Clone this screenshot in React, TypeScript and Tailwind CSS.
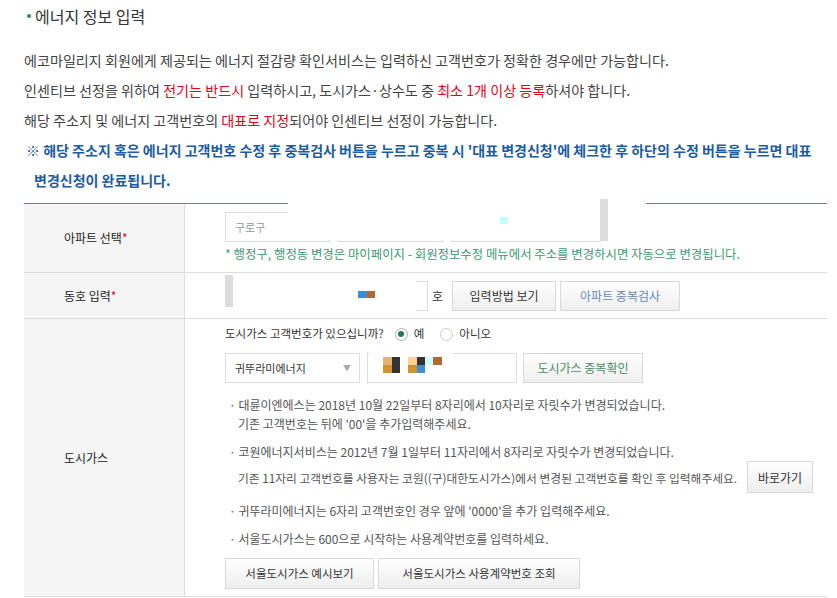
import React from "react";

const Btn = ({ children, className }: { children: React.ReactNode; className: string }) => (
  <button
    className={`flex items-center justify-center border border-[#d8d8d8] bg-linear-to-b from-white to-[#eeeeee] ${className}`}
  >
    {children}
  </button>
);

const Block = ({ className }: { className: string }) => <div className={`absolute ${className}`} />;

export default function App() {
  return (
    <div className="w-[837px] h-[598px] overflow-hidden bg-white text-[#444] font-['Noto_Sans_CJK_KR',sans-serif]">
      <div className="pl-6 pr-[10px]">
        <div className="h-8 flex items-center pl-[3px] gap-[4px]">
          <span className="w-[4px] h-[4px] rounded-full bg-[#2a8a5c]" />
          <h2 className="text-[16px] text-[#333] leading-none">에너지 정보 입력</h2>
        </div>

        <div className="mt-[13px] leading-[30px] whitespace-nowrap">
          <p className="text-[14.1px]">에코마일리지 회원에게 제공되는 에너지 절감량 확인서비스는 입력하신 고객번호가 정확한 경우에만 가능합니다.</p>
          <p className="text-[14.1px]">
            인센티브 선정을 위하여 <span className="text-[#e8001c]">전기는 반드시</span> 입력하시고, 도시가스·상수도 중{" "}
            <span className="text-[#e8001c]">최소 1개 이상 등록</span>하셔야 합니다.
          </p>
          <p className="text-[14.1px]">
            해당 주소지 및 에너지 고객번호의 <span className="text-[#e8001c]">대표로 지정</span>되어야 인센티브 선정이 가능합니다.
          </p>
          <p className="text-[14px] font-bold text-[#1b5ca4] pl-[2px]">
            ※ 해당 주소지 혹은 에너지 고객번호 수정 후 중복검사 버튼을 누르고 중복 시 '대표 변경신청'에 체크한 후 하단의 수정 버튼을 누르면 대표
          </p>
          <p className="text-[14px] font-bold text-[#1b5ca4] pl-[10px]">변경신청이 완료됩니다.</p>
        </div>

        <div className="relative mt-2 border-t border-[#3f9a78] text-[#333]">
          {/* Row 1 */}
          <div className="flex border-b border-[#ddd]">
            <div className="w-[161px] shrink-0 bg-[#f5f5f5] border-r border-[#ddd] flex items-center pl-10 text-[12px] text-[#222]">
              아파트 선택<span className="text-[#e8001c]">*</span>
            </div>
            <div className="flex-1 h-[68px] pl-10 pt-2 flex flex-col">
              <div className="flex gap-2">
                <div className="w-[105px] h-[30px] border border-[#ddd] flex items-center pl-[9px] text-[11px] text-[#999]">구로구</div>
                <div className="w-[105px] h-[30px] border border-[#ddd]" />
                <div className="w-[150px] h-[30px] border border-[#ddd]" />
              </div>
              <p className="mt-[4px] text-[12.4px] leading-[16px] text-[#3b9a74] whitespace-nowrap">
                * 행정구, 행정동 변경은 마이페이지 - 회원정보수정 메뉴에서 주소를 변경하시면 자동으로 변경됩니다.
              </p>
            </div>
          </div>

          {/* Row 2 */}
          <div className="flex border-b border-[#ddd]">
            <div className="w-[161px] shrink-0 bg-[#f5f5f5] border-r border-[#ddd] flex items-center pl-10 text-[12px] text-[#222]">
              동호 입력<span className="text-[#e8001c]">*</span>
            </div>
            <div className="flex-1 h-[45px] pl-10 flex items-center">
              <div className="w-[203px] h-[30px] border border-[#ddd]" />
              <span className="ml-[4px] text-[12px]">호</span>
              <Btn className="ml-[9px] w-[104px] h-[30px] text-[12px] text-[#333]">입력방법 보기</Btn>
              <Btn className="ml-[4px] w-[120px] h-[30px] text-[12px] text-[#6a88b6]">아파트 중복검사</Btn>
            </div>
          </div>

          {/* Row 3 */}
          <div className="flex border-b border-[#ddd]">
            <div className="w-[161px] shrink-0 bg-[#f5f5f5] border-r border-[#ddd] flex items-center pl-10 text-[12px] text-[#222]">
              도시가스
            </div>
            <div className="flex-1 h-[277px] pl-10 pt-[7px] flex flex-col">
              <div className="h-4 flex items-center text-[11.5px] text-[#333] whitespace-nowrap">
                <span>도시가스 고객번호가 있으십니까?</span>
                <span className="ml-[11px] w-[13px] h-[13px] rounded-full border border-[#aaa] flex items-center justify-center">
                  <span className="w-[6px] h-[6px] rounded-full bg-[#1f7a50]" />
                </span>
                <span className="ml-[6px]">예</span>
                <span className="ml-[16px] w-[13px] h-[13px] rounded-full border border-[#ccc]" />
                <span className="ml-[6px]">아니오</span>
              </div>

              <div className="mt-[11px] flex">
                <div className="w-[135px] h-[30px] border border-[#ddd] flex items-center justify-between pl-[9px] pr-[8px] text-[11px] text-[#333]">
                  <span>귀뚜라미에너지</span>
                  <span className="text-[8px] text-[#aaa]">▼</span>
                </div>
                <div className="ml-[7px] w-[150px] h-[30px] border border-[#ddd]" />
                <Btn className="ml-[6px] w-[120px] h-[30px] text-[12px] text-[#4a8a6a]">도시가스 중복확인</Btn>
              </div>

              <div className="mt-[12px] text-[12px] leading-[19px] text-[#555] whitespace-nowrap">
                <p className="pl-[4px]">· 대륜이엔에스는 2018년 10월 22일부터 8자리에서 10자리로 자릿수가 변경되었습니다.</p>
                <p className="pl-[13px]">기존 고객번호는 뒤에 '00'을 추가입력해주세요.</p>
                <p className="pl-[4px] mt-[9px]">· 코원에너지서비스는 2012년 7월 1일부터 11자리에서 8자리로 자릿수가 변경되었습니다.</p>
                <div className="pl-[13px] h-[32px] flex items-center">
                  <span className="text-[11.75px]">기존 11자리 고객번호를 사용자는 코원((구)대한도시가스)에서 변경된 고객번호를 확인 후 입력해주세요.</span>
                  <Btn className="ml-[10px] w-[66px] h-[32px] text-[12px] text-[#333]">바로가기</Btn>
                </div>
                <p className="pl-[4px] mt-[8px]">· 귀뚜라미에너지는 6자리 고객번호인 경우 앞에 '0000'을 추가 입력해주세요.</p>
                <p className="pl-[4px] mt-[9px]">· 서울도시가스는 600으로 시작하는 사용계약번호를 입력하세요.</p>
              </div>

              <div className="mt-[10px] flex gap-[4px]">
                <Btn className="w-[149px] h-[31px] text-[11.5px] text-[#333]">서울도시가스 예시보기</Btn>
                <Btn className="w-[202px] h-[31px] text-[11.5px] text-[#333]">서울도시가스 사용계약번호 조회</Btn>
              </div>
            </div>
          </div>

          {/* redaction overlays */}
          <Block className="left-[264px] top-[-8px] w-[358px] h-[44px] bg-white" />
          <Block className="left-[576px] top-[-5px] w-[8px] h-[42px] bg-[#dddddd]" />
          <Block className="left-[476px] top-[13px] w-[8px] h-[7px] bg-[#c6fdfd]" />

          <Block className="left-[200px] top-[75px] w-[192px] h-[34px] bg-white" />
          <Block className="left-[201px] top-[71px] w-[8px] h-[32px] bg-[#dddddd]" />
          <Block className="left-[334px] top-[87px] w-[9px] h-[7px] bg-[#3a8fd6]" />
          <Block className="left-[343px] top-[87px] w-[8px] h-[7px] bg-[#b06a30]" />

          <Block className="left-[345px] top-[147px] w-[84px] h-[29px] bg-white" />
          <Block className="left-[359px] top-[153px] w-[9px] h-[8px] bg-[#e8b070]" />
          <Block className="left-[368px] top-[153px] w-[8px] h-[16px] bg-[#333333]" />
          <Block className="left-[359px] top-[161px] w-[9px] h-[8px] bg-[#d4922e]" />
          <Block className="left-[384px] top-[153px] w-[9px] h-[8px] bg-[#ffd090]" />
          <Block className="left-[393px] top-[153px] w-[8px] h-[8px] bg-[#333333]" />
          <Block className="left-[401px] top-[153px] w-[8px] h-[8px] bg-[#d0ffff]" />
          <Block className="left-[409px] top-[153px] w-[9px] h-[8px] bg-[#b06a30]" />
          <Block className="left-[384px] top-[161px] w-[9px] h-[8px] bg-[#d4922e]" />
          <Block className="left-[393px] top-[161px] w-[8px] h-[8px] bg-[#3a8fd6]" />
        </div>
      </div>
    </div>
  );
}
